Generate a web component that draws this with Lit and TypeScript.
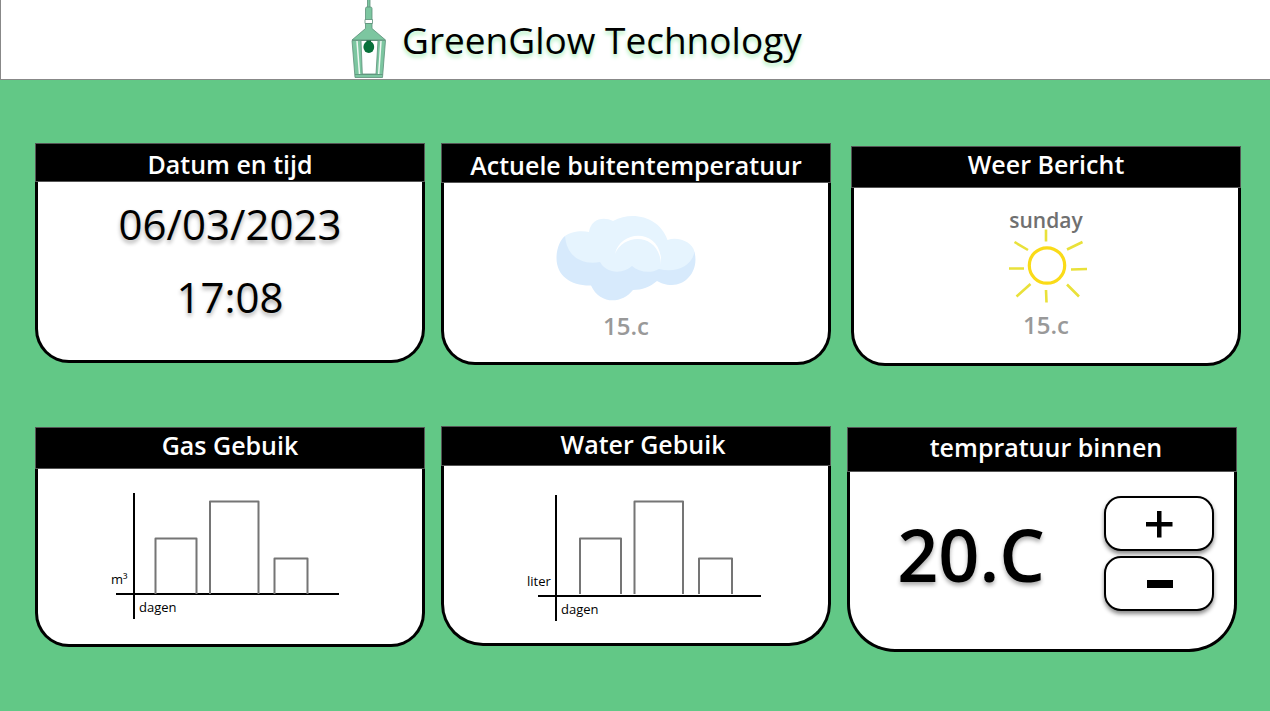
import { LitElement, html, svg, css } from "lit";
import { customElement, property, state } from "lit/decorators.js";

interface Bar {
  x: number;
  top: number;
  width: number;
}

@customElement("usage-chart")
export class UsageChart extends LitElement {
  @property() unit = "";
  @property() label = "";
  @property({ type: Number }) barOffset = 0;
  @property({ type: Number }) baseline = 102;
  @property({ type: Number }) unitX = 0;

  static styles = css`
    :host {
      display: block;
    }
    .chart {
      display: block;
      width: 240px;
      height: 130px;
    }
    .axis {
      stroke: #000;
      stroke-width: 2;
      fill: none;
    }
    .bar {
      stroke: #757575;
      stroke-width: 2;
      fill: none;
      stroke-linejoin: round;
    }
    .caption {
      font: 500 13px "Open Sans", "Noto Sans", sans-serif;
      fill: #000;
    }
  `;

  private bars: Bar[] = [
    { x: 0, top: 46.5, width: 41 },
    { x: 54.5, top: 9.5, width: 48.5 },
    { x: 119, top: 66.5, width: 33 },
  ];

  render() {
    const y = this.baseline;
    return html`
      <svg class="chart" viewBox="0 0 240 130" role="img" aria-label=${this.label}>
        <path class="axis" d="M30 ${y - 101}V${y + 25}M12 ${y}H235" />
        ${this.bars.map((b) => {
          const x = this.barOffset + b.x;
          return svg`<path class="bar" d="M${x} 102V${b.top}H${x + b.width}V102" />`;
        })}
        <text class="caption" x=${this.unitX} y=${y - 10}>${this.unit}</text>
        <text class="caption" x="35" y=${y + 18}>dagen</text>
      </svg>
    `;
  }
}

@customElement("info-card")
export class InfoCard extends LitElement {
  @property() heading = "";

  static styles = css`
    :host {
      display: flex;
      flex-direction: column;
      --head: 42px;
      --head-align: flex-start;
      --head-pad: 0;
      --radius: 34px;
    }
    .head {
      box-sizing: border-box;
      min-height: var(--head);
      display: flex;
      justify-content: center;
      align-items: var(--head-align);
      padding: var(--head-pad);
      background: #000;
      border: 1px solid #555;
      color: #fff;
    }
    .title {
      margin: 0;
      font-size: 25px;
      line-height: 34px;
      font-weight: 600;
      text-align: center;
    }
    .body {
      box-sizing: border-box;
      flex: 1;
      display: flex;
      flex-direction: column;
      background: #fff;
      border: 3px solid #000;
      border-top: 0;
      border-radius: 0 0 var(--radius) var(--radius);
    }
  `;

  render() {
    return html`
      <div class="head"><h2 class="title">${this.heading}</h2></div>
      <div class="body"><slot></slot></div>
    `;
  }
}

@customElement("app-root")
export class AppRoot extends LitElement {
  @state() private target = 20;

  static styles = css`
    :host {
      display: flex;
      flex-direction: column;
      min-height: 100vh;
      background: #62c886;
      color: #000;
      font-family: "Open Sans", "Noto Sans", sans-serif;
    }
    .bar {
      display: flex;
      align-items: center;
      gap: 14px;
      height: 79px;
      padding-left: 349px;
      background: #fff;
      border-left: 1px solid #888;
      border-bottom: 1px solid #888;
    }
    .logo {
      display: block;
      width: 38px;
      height: 79px;
    }
    .brand {
      margin: 0;
      font-size: 37px;
      line-height: 52px;
      font-weight: 400;
      white-space: nowrap;
      text-shadow: 0 3px 4px #a5efb8;
    }
    .grid {
      display: grid;
      grid-template-columns: repeat(3, 1fr);
      column-gap: 16px;
      row-gap: 60px;
      padding: 63px 33px 48px 35px;
      align-items: start;
    }
    .card {
      min-height: 220px;
    }
    .clock {
      --head: 39px;
      --head-align: flex-end;
    }
    .outside {
      --head: 40px;
      --head-align: flex-end;
      min-height: 222px;
    }
    .forecast {
      margin: 3px -4px 0 4px;
    }
    .gas {
      margin-top: 1px;
    }
    .water {
      --head: 40px;
      --head-pad: 0 0 0 14px;
      --radius: 42px;
    }
    .inside {
      --head: 45px;
      --head-pad: 2px 0 0 8px;
      --radius: 48px;
      margin-top: 1px;
      min-height: 225px;
    }
    .times {
      display: flex;
      flex-direction: column;
      align-items: center;
      gap: 16px;
      padding-top: 13px;
    }
    .time {
      margin: 0;
      font-size: 42px;
      line-height: 57px;
      text-shadow: 0 3px 4px #0005;
    }
    .weather {
      display: flex;
      flex-direction: column;
      align-items: center;
    }
    .now {
      padding: 33px 20px 0 0;
      gap: 8px;
    }
    .next {
      padding-top: 17px;
    }
    .cloud {
      display: block;
      width: 142px;
      height: 86px;
    }
    .sun {
      display: block;
      width: 82px;
      height: 80px;
      margin-top: -6px;
    }
    .day {
      margin: 0;
      font-size: 21px;
      line-height: 30px;
      font-weight: 600;
      color: #707070;
    }
    .degrees {
      margin: 0;
      font-size: 24px;
      line-height: 32px;
      font-weight: 600;
      color: #999;
    }
    .plot {
      display: flex;
      justify-content: center;
    }
    .plot-gas {
      padding: 23px 12px 0 0;
    }
    .plot-water {
      padding: 26px 0 0 20px;
    }
    .control {
      display: flex;
      align-items: center;
      padding: 24px 20px 0 0;
    }
    .reading {
      flex: 1;
      text-align: center;
      font-size: 72px;
      line-height: 98px;
      font-weight: 600;
      padding-right: 12px;
      text-shadow: 0 3px 4px #0005;
    }
    .steps {
      display: flex;
      flex-direction: column;
      gap: 5px;
    }
    .step {
      display: flex;
      align-items: center;
      justify-content: center;
      width: 110px;
      height: 55px;
      padding: 0;
      background: #fff;
      border: 2px solid #000;
      border-radius: 17px;
      box-shadow: 0 3px 4px #0007;
      cursor: pointer;
    }
    .sign {
      display: block;
      width: 30px;
      height: 30px;
      fill: #000;
    }
  `;

  private change(by: number) {
    this.target += by;
  }

  private lantern() {
    return html`
      <svg class="logo" viewBox="0 0 38 79" aria-hidden="true">
        <g fill="#7cc6a0" stroke="#5c8f78" stroke-width="0.8">
          <path d="M17.5 -1h2.500v9h-2.500z" />
          <path d="M15.500 8.500q0-1.500 1.500-1.500h3.500q1.500 0 1.500 1.500V20h-6.500z" />
          <path d="M15 19.500h7.500v4h-7.500z" fill="#fff" />
          <path d="M15.500 23.500h6.500v5L35.500 40H2L15.500 28.500z" />
          <path
            fill-rule="evenodd"
            d="M2 40.500H35.500L32.500 77.500H5zM11 40.500L12.300 74H26L28 40.500z"
          />
        </g>
        <path d="M7 41L9.500 74M31 41L28.700 74" stroke="#eef8f2" stroke-width="1.500" fill="none" />
        <path d="M5 74.500H32.500" stroke="#5c8f78" stroke-width="0.800" fill="none" />
        <path d="M16.500 40.500h4.500v3h-4.500z" fill="#07552c" />
        <ellipse cx="18.800" cy="47" rx="5.400" ry="6" fill="#08703a" />
      </svg>
    `;
  }

  private cloud() {
    return html`
      <svg class="cloud" viewBox="0 0 142 86" aria-hidden="true">
        <path
          fill="#d7eafc"
          d="M1.500 42C1.500 33 5 24 10 20L110 24L139.500 36C144 54 132 69 117 69C110 69 106 67 102 65C95 71 87 74 78 74C67 88 45 89 36 69.500C16 70 1.500 60 1.500 42z"
        />
        <path
          fill="#e6f4fe"
          d="M10 20C15 16 26 14 34 16C36 3 48 0 58 5C79-6 105 2 112.500 24C124 20 138 27 139.500 36C136 52 119 57 104 53C95 58 84 56 77 50C67 59 51 57 45 46C28 49 12 42 10 20z"
        />
        <path
          fill="#fff"
          d="M60 38C65 14 103 12 106 42L106 50C106 17 69 16 60 38z"
        />
      </svg>
    `;
  }

  private sun() {
    return html`
      <svg class="sun" viewBox="-1 0 82 80" aria-hidden="true">
        <circle cx="41" cy="36.500" r="17.700" fill="none" stroke="#fadb18" stroke-width="3.200" />
        <path
          fill="none"
          stroke="#e9e13a"
          stroke-width="2.600"
          d="M40 0.500V12.500M61 20.500L76.500 13M65 40.500L81 40M61 55.500L73 67.500M40 61L40.500 73.500M24.500 55L10.500 67.500M18 39.500H3M22 21L8.500 13"
        />
      </svg>
    `;
  }

  render() {
    return html`
      <header class="bar">
        ${this.lantern()}
        <h1 class="brand">GreenGlow Technology</h1>
      </header>
      <main class="grid">
        <info-card class="card clock" heading="Datum en tijd">
          <div class="times">
            <p class="time">06/03/2023</p>
            <p class="time">17:08</p>
          </div>
        </info-card>
        <info-card class="card outside" heading="Actuele buitentemperatuur">
          <div class="weather now">
            ${this.cloud()}
            <p class="degrees">15.c</p>
          </div>
        </info-card>
        <info-card class="card forecast" heading="Weer Bericht">
          <div class="weather next">
            <p class="day">sunday</p>
            ${this.sun()}
            <p class="degrees">15.c</p>
          </div>
        </info-card>
        <info-card class="card gas" heading="Gas Gebuik">
          <div class="plot plot-gas">
            <usage-chart unit="m³" label="Gas Gebuik" .unitX=${7} .barOffset=${51.5}></usage-chart>
          </div>
        </info-card>
        <info-card class="card water" heading="Water Gebuik">
          <div class="plot plot-water">
            <usage-chart
              unit="liter"
              label="Water Gebuik"
              .unitX=${1}
              .barOffset=${54}
              .baseline=${104}
            ></usage-chart>
          </div>
        </info-card>
        <info-card class="card inside" heading="tempratuur binnen">
          <div class="control">
            <output class="reading">${this.target}.C</output>
            <div class="steps">
              <button class="step" type="button" aria-label="Warmer" @click=${() => this.change(1)}>
                <svg class="sign" viewBox="0 0 30 30" aria-hidden="true">
                  <path d="M13 2h4.500v11h11v4.500h-11v11H13v-11H2V13h11z" />
                </svg>
              </button>
              <button class="step" type="button" aria-label="Kouder" @click=${() => this.change(-1)}>
                <svg class="sign" viewBox="0 0 30 30" aria-hidden="true">
                  <path d="M3 11h26v8H3z" />
                </svg>
              </button>
            </div>
          </div>
        </info-card>
      </main>
    `;
  }
}
